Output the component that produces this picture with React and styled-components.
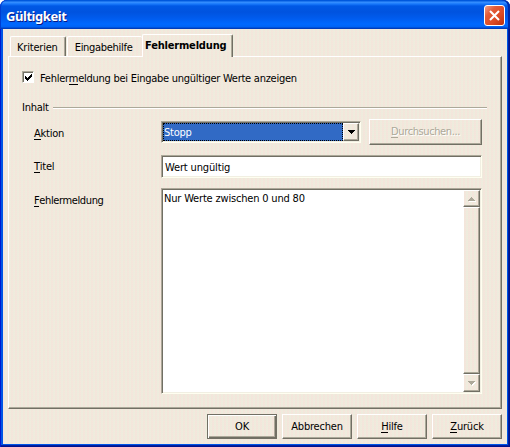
import React from 'react';
import styled, { createGlobalStyle, css } from 'styled-components';

const face = '#f0eadf';
const shadow = '#aca899';
const dark = '#716f64';

const dither = css`
  background-color: ${face};
  background-image:
    linear-gradient(90deg, #f8e2d866 50%, #ecefdc66 50%),
    linear-gradient(#f6e6da66 50%, #ececdc66 50%);
  background-size: 4px 4px, 2px 2px;
`;

const GlobalStyle = createGlobalStyle`
  * { box-sizing: border-box; }
  html, body { margin: 0; background: #fff; }
  body { overflow: hidden; font: 11px/14px "DejaVu Sans Condensed", "DejaVu Sans", sans-serif; font-stretch: condensed; letter-spacing: -0.25px; color: #000; }
  u { text-decoration: none; box-shadow: 0 1px 0 currentColor; display: inline-block; line-height: 10px; }
`;

const Window = styled.div`
  width: 510px;
  height: 447px;
  display: flex;
  flex-direction: column;
  padding: 0 3px 3px;
  border-radius: 7px 7px 0 0;
  background: #0055e5;
  box-shadow: inset 1px 0 #0019cf, inset -1px -1px #00138c, inset -2px -2px #001ea0;
`;

const TitleBar = styled.header`
  flex: 0 0 29px;
  margin: 0 -3px;
  padding: 1px 5px 0 6px;
  display: flex;
  align-items: center;
  justify-content: space-between;
  border-radius: 7px 7px 0 0;
  background: linear-gradient(#0058dd 0, #0058dd 1px, #3a92ff 2px, #1878fb 4px, #0058e5 6px, #0053df 12px, #005bed 18px, #0068ff 24px, #0063f5 27px, #0041c4 28px, #0038b2 29px);
  box-shadow: inset 1px 0 #003cd0, inset -2px 0 #0029a9;
`;

const Title = styled.h1`
  margin: 1px 0 0;
  color: #fff;
  font: bold 13px/16px "Noto Sans", sans-serif;
  font-stretch: normal;
  letter-spacing: -0.45px;
  text-shadow: 1px 1px #0a1883;
`;

const CloseButton = styled.button`
  width: 21px;
  height: 21px;
  margin-top: 1px;
  padding: 0;
  display: grid;
  place-items: center;
  border: 1px solid #fff;
  border-radius: 3px;
  background: linear-gradient(135deg, #f0a088, #e35c38 30%, #dc4a24 65%, #b92f0c);
`;

const Body = styled.main`
  flex: 1;
  min-height: 0;
  display: flex;
  flex-direction: column;
  padding: 5px;
  ${dither}
`;

const Tabs = styled.nav`
  height: 22px;
  display: flex;
  align-items: flex-end;
  padding-left: 2px;
`;

const Tab = styled.div`
  position: relative;
  width: ${(p) => p.$width}px;
  height: ${(p) => (p.$active ? 23 : 20)}px;
  margin-bottom: ${(p) => (p.$active ? -1 : 0)}px;
  margin-right: ${(p) => p.$gap || 0}px;
  padding: ${(p) => (p.$active ? '4px 0 0 2px' : '4px 0 0 6px')};
  white-space: nowrap;
  border-top: 1px solid #fff;
  border-left: 1px solid #fff;
  border-right: ${(p) => (p.$edge ? `1px solid ${dark}` : 'none')};
  box-shadow: ${(p) => (p.$edge ? `inset -1px 0 ${shadow}` : 'none')};
  border-radius: 2px 2px 0 0;
  font-weight: ${(p) => (p.$active ? 'bold' : 'normal')};
  letter-spacing: ${(p) => p.$spacing}px;
  ${dither}
`;

const Panel = styled.section`
  height: 353px;
  width: 494px;
  padding: 14px 13px 0;
  border: 1px solid #fff;
  border-right-color: ${dark};
  border-bottom-color: ${dark};
  box-shadow: inset -1px -1px ${shadow};
`;

const Label = styled.span`
  white-space: nowrap;
  letter-spacing: ${(p) => p.$spacing ?? -0.25}px;
`;

const CheckRow = styled.label`
  display: flex;
  align-items: flex-start;
  gap: 6px;
  height: 30px;
`;

const CheckLabel = styled(Label)`
  margin-top: 1px;
`;

const Checkbox = styled.span`
  width: 12px;
  height: 12px;
  display: grid;
  place-items: center;
  background: #fff;
  border: 1px solid #fff;
  border-top-color: ${shadow};
  border-left-color: ${shadow};
  box-shadow: inset 1px 1px ${dark};
`;

const GroupHeading = styled.div`
  height: 14px;
  display: flex;
  align-items: center;
  gap: 4px;
`;

const Rule = styled.i`
  width: 435px;
  height: 2px;
  margin-left: auto;
  margin-right: 1px;
  border-top: 1px solid ${shadow};
  border-bottom: 1px solid #fff;
`;

const Fields = styled.div`
  display: grid;
  grid-template-columns: 127px 200px 121px;
  grid-template-rows: 26px 23px 206px;
  row-gap: 10px;
  padding: 4px 0 0 12px;
  align-items: start;
`;

const FieldLabel = styled(Label)`
  margin-top: ${(p) => p.$top}px;
`;

const Sunken = styled.div`
  background: #fff;
  border: 1px solid #fffef0;
  border-top-color: ${shadow};
  border-left-color: ${shadow};
  box-shadow: inset 1px 1px ${dark}, inset -1px -1px #f1efe2;
`;

const Combo = styled(Sunken)`
  width: 200px;
  height: 22px;
  margin-top: 2px;
  padding: 1px;
  display: flex;
`;

const Selected = styled.div`
  width: 180px;
  padding: 3px 0 0 1px;
  color: #fff;
  background: #316ac5;
  outline: 1px dotted #000;
  outline-offset: -1px;
`;

const raised = css`
  border: 1px solid #fff;
  border-right-color: ${dark};
  border-bottom-color: ${dark};
  box-shadow: inset -1px -1px ${shadow};
  ${dither}
`;

const ArrowButton = styled.div`
  width: ${(p) => p.$w}px;
  height: ${(p) => p.$h}px;
  flex: none;
  display: grid;
  place-items: center;
  ${raised}
`;

const TextInput = styled(Sunken)`
  grid-column: 2 / 4;
  width: 321px;
  height: 23px;
  padding: 5px 0 0 3px;
`;

const TextArea = styled(Sunken)`
  grid-column: 2 / 4;
  width: 321px;
  height: 206px;
  padding: 1px;
  display: flex;
  justify-content: space-between;
`;

const AreaText = styled.div`
  padding: 2px 0 0 1px;
`;

const Scrollbar = styled.div`
  width: 17px;
  height: 202px;
  display: flex;
  flex-direction: column;
`;

const Thumb = styled.div`
  flex: 1;
  ${raised}
`;

const Button = styled.button`
  width: ${(p) => p.$w || 70}px;
  height: ${(p) => p.$h || 25}px;
  margin-left: ${(p) => p.$left || 0}px;
  padding: 0;
  font: inherit;
  white-space: nowrap;
  letter-spacing: ${(p) => p.$spacing ?? -0.2}px;
  ${raised}
  color: ${(p) => (p.$disabled ? shadow : '#000')};
  text-shadow: ${(p) => (p.$disabled ? '1px 1px #fff' : 'none')};
  ${(p) =>
    p.$default &&
    css`
      border-color: ${dark};
      box-shadow: inset 1px 1px #fff, inset -1px -1px ${dark}, inset -2px -2px ${shadow};
    `}
`;

const Actions = styled.footer`
  display: flex;
  justify-content: flex-end;
  gap: 5px;
  margin-top: 5px;
`;

const Triangle = ({ up, color = '#000', light }) => (
  <svg width="7" height="4" shapeRendering="crispEdges" overflow="visible">
    {light && <path transform="translate(1 1)" d={up ? 'M0 4H7V3H6V2H5V1H4V0H3V1H2V2H1V3H0Z' : 'M0 0H7V1H6V2H5V3H4V4H3V3H2V2H1V1H0Z'} fill="#fff" />}
    <path d={up ? 'M0 4H7V3H6V2H5V1H4V0H3V1H2V2H1V3H0Z' : 'M0 0H7V1H6V2H5V3H4V4H3V3H2V2H1V1H0Z'} fill={color} />
  </svg>
);

export default function App() {
  return (
    <>
      <GlobalStyle />
      <Window>
        <TitleBar>
          <Title>Gültigkeit</Title>
          <CloseButton aria-label="Schließen">
            <svg width="13" height="13" viewBox="0 0 13 13">
              <path d="M2 2L11 11M11 2L2 11" stroke="#fff" strokeWidth="2.1" />
            </svg>
          </CloseButton>
        </TitleBar>
        <Body>
          <Tabs>
            <Tab $width={56} $gap={1} $edge $spacing={-0.2}>Kriterien</Tab>
            <Tab $width={75} $spacing={-0.3}>&#8202;Eingabehilfe</Tab>
            <Tab $width={91} $active $edge $spacing={-0.18}>Fehlermeldung</Tab>
          </Tabs>
          <Panel>
            <CheckRow>
              <Checkbox>
                <svg width="9" height="9" viewBox="0 0 9 9" shapeRendering="crispEdges">
                  <path d="M1 3h1v1h1v1h1v-1h1v-1h1v-1h1v-1h1v3h-1v1h-1v1h-1v1h-1v1h-1v-1h-1v-1h-1z" />
                </svg>
              </Checkbox>
              <CheckLabel $spacing={-0.26}>Fehler<u>m</u>eldung bei Eingabe ungültiger Werte anzeigen</CheckLabel>
            </CheckRow>
            <GroupHeading>
              <Label>Inhalt</Label>
              <Rule />
            </GroupHeading>
            <Fields>
              <FieldLabel $top={8}><u>A</u>ktion</FieldLabel>
              <Combo>
                <Selected>Stopp</Selected>
                <ArrowButton $w={16} $h={18}><Triangle /></ArrowButton>
              </Combo>
              <Button $w={113} $h={26} $left={8} $spacing={-0.4} $disabled><u>D</u>urchsuchen...</Button>
              <FieldLabel $top={5}><u>T</u>itel</FieldLabel>
              <TextInput><Label $spacing={-0.15}>Wert ungültig</Label></TextInput>
              <FieldLabel $top={6} $spacing={-0.38}><u>F</u>ehlermeldung</FieldLabel>
              <TextArea>
                <AreaText><Label $spacing={-0.18}>Nur Werte zwischen 0 und 80</Label></AreaText>
                <Scrollbar>
                  <ArrowButton $w={17} $h={17}><Triangle up light color={shadow} /></ArrowButton>
                  <Thumb />
                  <ArrowButton $w={17} $h={18}><Triangle light color={shadow} /></ArrowButton>
                </Scrollbar>
              </TextArea>
            </Fields>
          </Panel>
          <Actions>
            <Button $default>OK</Button>
            <Button>Abbrechen</Button>
            <Button><u>H</u>ilfe</Button>
            <Button><u>Z</u>urück</Button>
          </Actions>
        </Body>
      </Window>
    </>
  );
}
